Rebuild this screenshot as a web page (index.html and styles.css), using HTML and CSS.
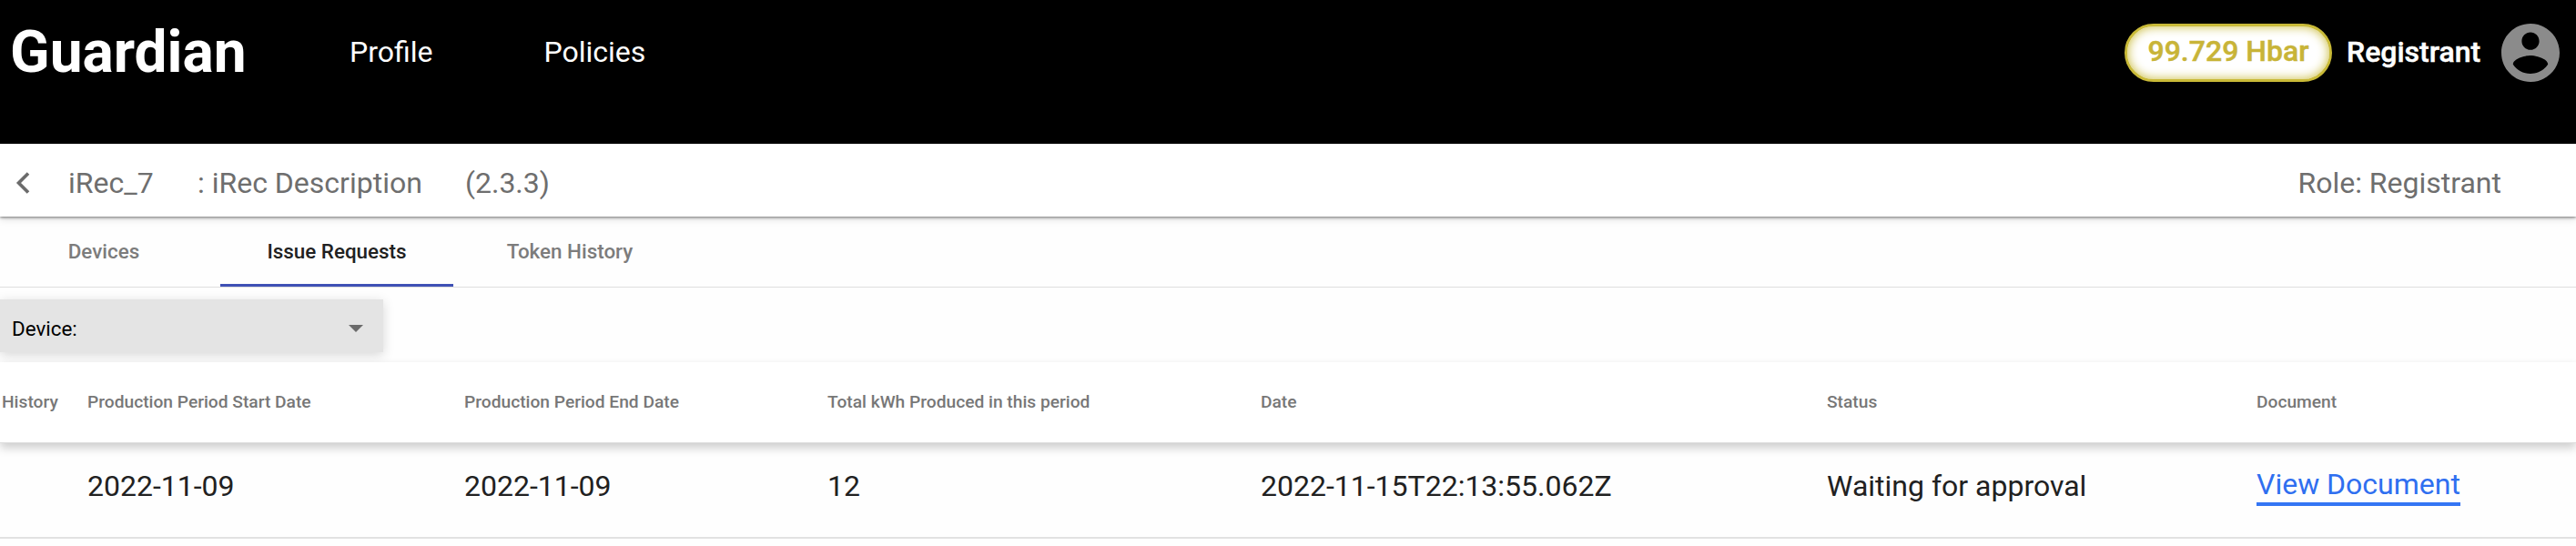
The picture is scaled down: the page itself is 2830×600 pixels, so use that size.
FILE: index.html
```html
<!DOCTYPE html>
<html lang="en">
<head>
<meta charset="utf-8">
<title>Guardian</title>
<link rel="stylesheet" href="styles.css">
</head>
<body>
<header class="topbar">
  <div class="brand">Guardian</div>
  <nav class="nav"><a>Profile</a><a>Policies</a></nav>
  <div class="account">
    <span class="balance">99.729 Hbar</span>
    <span class="user">Registrant</span>
    <svg class="avatar" viewBox="2 2 20 20"><path fill="#8b8b8b" d="M12 2C6.48 2 2 6.48 2 12s4.480 10 10 10 10-4.480 10-10S17.520 2 12 2zm0 3c1.660 0 3 1.340 3 3s-1.340 3-3 3-3-1.340-3-3 1.340-3 3-3zm0 14.200c-2.500 0-4.710-1.280-6-3.220.03-1.990 4-3.080 6-3.080 1.990 0 5.970 1.090 6 3.080-1.290 1.940-3.500 3.220-6 3.220z"/></svg>
  </div>
</header>
<section class="policy">
  <svg class="back" viewBox="0 0 16 24"><path d="M14 1.500 3.500 12 14 22.500" fill="none" stroke="#6b6b6b" stroke-width="3.600"/></svg>
  <span class="policy-name">iRec_7</span>
  <span class="policy-desc">: iRec Description</span>
  <span class="policy-version">(2.3.3)</span>
  <span class="role">Role: Registrant</span>
</section>
<nav class="tabs">
  <div class="tab tab-first">Devices</div>
  <div class="tab tab-active">Issue Requests</div>
  <div class="tab">Token History</div>
</nav>
<div class="filters">
  <div class="select"><span>Device:</span><i class="caret"></i></div>
</div>
<main class="table">
  <div class="row head">
    <div>History</div><div>Production Period Start Date</div><div>Production Period End Date</div><div>Total kWh Produced in this period</div><div>Date</div><div>Status</div><div>Document</div>
  </div>
  <div class="row data">
    <div></div><div>2022-11-09</div><div>2022-11-09</div><div>12</div><div>2022-11-15T22:13:55.062Z</div><div>Waiting for approval</div><div><a class="link">View Document</a></div>
  </div>
</main>
</body>
</html>
```
FILE: styles.css
```css
* { box-sizing: border-box; }
body {
  margin: 0;
  height: 600px;
  overflow: hidden;
  background: #fefefe;
  color: #212121;
  font-family: Roboto, "Liberation Sans", sans-serif;
  white-space: nowrap;
}
.topbar {
  display: flex;
  align-items: center;
  height: 158px;
  padding: 0 18px 42px 11px;
  background: #000;
  color: #fff;
  font-size: 32px;
}
.brand { width: 373px; font-size: 64px; font-weight: 700; line-height: 76px; }
.nav { display: flex; gap: 122px; padding-bottom: 2px; }
.account { display: flex; align-items: center; margin-left: auto; font-weight: 500; -webkit-text-stroke: .5px; }
.balance {
  width: 228px;
  height: 64px;
  border: 3px solid #c9ba38;
  border-radius: 32px;
  background: #fff;
  box-shadow: inset 0 0 12px #c9ba38;
  color: #c8b438;
  line-height: 55px;
  text-align: center;
}
.user { width: 170px; margin-left: 16px; padding-bottom: 3px; }
.avatar { width: 64px; height: 64px; }
.policy {
  position: relative;
  display: flex;
  align-items: center;
  height: 80px;
  padding: 5px 82px 0 17px;
  background: #fff;
  box-shadow: 0 1px 3px rgba(0, 0, 0, .5), 0 3px 8px rgba(0, 0, 0, .12);
  color: #6e6e6e;
  font-size: 32px;
}
.back { width: 16px; height: 24px; margin-right: 42px; }
.policy-name { width: 142px; }
.policy-desc { width: 294px; }
.role { margin-left: auto; }
.tabs {
  display: grid;
  grid-template-columns: 242px 256px 256px;
  height: 78px;
  border-bottom: 1px solid #dedede;
  color: #7c7c7c;
  font-size: 22.400px;
  font-weight: 500;
  text-align: center;
  line-height: 77px;
}
.tab { height: 77px; }
.tab-first { padding-right: 14px; }
.tab-active { color: #212121; border-bottom: 3px solid #3f51b5; }
.filters { height: 82px; padding-top: 13px; overflow: hidden; }
.select {
  display: flex;
  align-items: center;
  justify-content: space-between;
  width: 421px;
  height: 58px;
  padding: 6px 22px 0 13px;
  background: #e4e4e4;
  box-shadow: 0 3px 12px rgba(0, 0, 0, .16);
  color: #000;
  font-size: 22.400px;
}
.caret {
  border: 8px solid transparent;
  border-top-color: #6b6b6b;
  border-bottom: 0;
  margin-bottom: 1px;
}
.row {
  display: grid;
  grid-template-columns: 94px 414px 399px 476px 622px 472px 1fr;
  align-items: center;
  padding-left: 2px;
}
.head {
  position: relative;
  height: 89px;
  padding-bottom: 2px;
  border-bottom: 1px solid #dedede;
  background: #fff;
  box-shadow: 0 5px 10px rgba(0, 0, 0, .2);
  color: #777;
  font-size: 19.200px;
  font-weight: 500;
}
.data {
  height: 105px;
  padding-bottom: 10px;
  border-bottom: 2px solid #e2e2e2;
  background: #fefefe;
  font-size: 32px;
}
.link { display: inline-block; height: 43px; border-bottom: 4px solid #3475f4; color: #2f6ff0; line-height: 38px; margin-top: 2px; }
```
